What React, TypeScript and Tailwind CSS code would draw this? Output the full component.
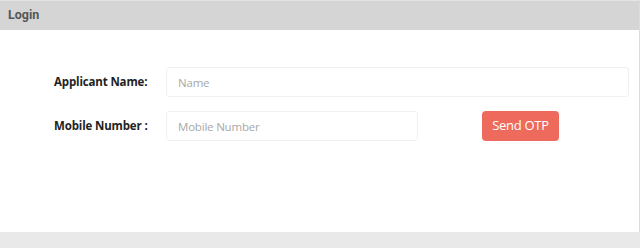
export default function App() {
  return (
    <div className="h-[248px] w-[640px] bg-[#e9e9e9] font-['Open_Sans',sans-serif]">
      <div className="h-[232px] border-r border-[#dcdcdc] bg-white">
        <div className="flex h-[30px] items-center border-t border-[#e4e4e4] bg-[#d5d5d5] px-2">
          <span className="font-['Roboto',sans-serif] text-[12.5px] font-bold text-[#555]">Login</span>
        </div>
        <div className="flex flex-col gap-[14px] pl-[54px] pr-[10px] pt-[37px]">
          <div className="flex items-center">
            <label className="w-[112px] text-[11.5px] font-bold tracking-[-0.15px] text-[#222]">Applicant Name:</label>
            <input
              placeholder="Name"
              className="h-[30px] w-[463px] rounded-[3px] border border-[#f0f0f0] px-[11px] text-[11.5px] tracking-[-0.2px] text-[#333] outline-none placeholder:text-[#a8a8a8]"
            />
          </div>
          <div className="flex items-center">
            <label className="w-[112px] text-[11.5px] font-bold tracking-[-0.15px] text-[#222]">Mobile Number :</label>
            <input
              placeholder="Mobile Number"
              className="h-[30px] w-[252px] rounded-[3px] border border-[#f0f0f0] px-[11px] text-[11.5px] tracking-[-0.2px] text-[#333] outline-none placeholder:text-[#a8a8a8]"
            />
            <button className="ml-[64px] h-[30px] w-[77px] rounded-[4px] bg-[#ee6a5c] text-[13px] tracking-[-0.3px] text-white">
              Send OTP
            </button>
          </div>
        </div>
      </div>
    </div>
  );
}
